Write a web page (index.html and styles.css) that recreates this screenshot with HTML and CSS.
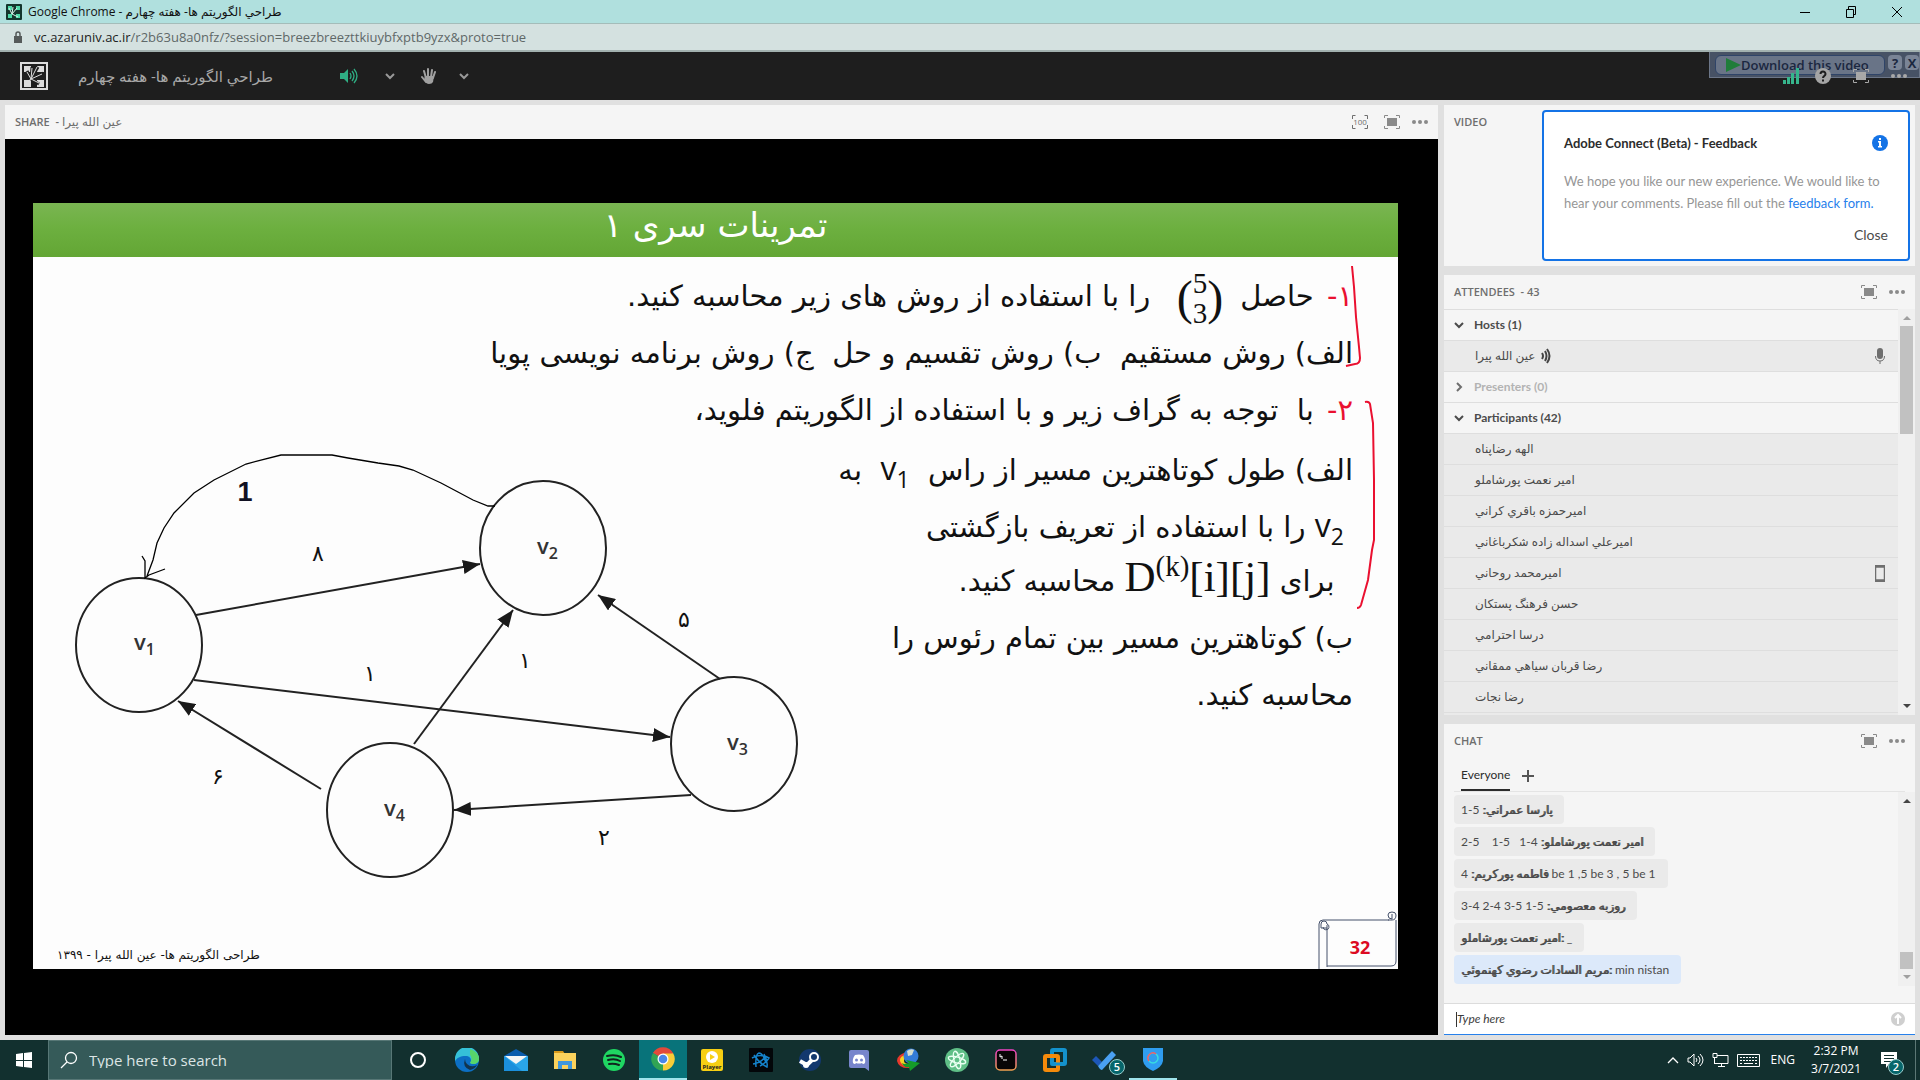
FILE: index.html
```html
<!DOCTYPE html>
<html lang="fa" dir="ltr">
<head>
<meta charset="utf-8">
<title>طراحي الگوريتم ها- هفته چهارم</title>
<link rel="stylesheet" href="styles.css">
</head>
<body>
<svg width="0" height="0" class="defs" aria-hidden="true">
  <defs>
    <symbol id="full" viewBox="0 0 16 16"><path d="M.5 4V1.500H4M12 1.500h3.500V4M15.500 12v2.500H12M4 14.500H.5V12" fill="none" stroke="currentColor"/><path d="M3 4h10v8H3z" fill="currentColor"/></symbol>
    <symbol id="dots" viewBox="0 0 16 16"><circle cx="2" cy="8" r="2" fill="currentColor"/><circle cx="8" cy="8" r="2" fill="currentColor"/><circle cx="14" cy="8" r="2" fill="currentColor"/></symbol>
    <symbol id="down" viewBox="0 0 10 10"><path d="M1 3l4 4 4-4" fill="none" stroke="currentColor" stroke-width="2"/></symbol>
    <symbol id="right" viewBox="0 0 10 10"><path d="M3 1l4 4-4 4" fill="none" stroke="currentColor" stroke-width="2"/></symbol>
    <symbol id="logo" viewBox="0 0 28 28"><path d="M1 1h26v26H1z" fill="none" stroke="currentColor" stroke-width="2"/><path d="M4 4h7v6H4zM17 4h7v6h-7zM4 18h7v7H4zM17 18h7v7h-7z" fill="currentColor"/><path d="M11 17L7 9M11 17l1-12M11 17l7-12M11 17l12-6M11 17l8 5" stroke="#1e1e1e" stroke-width="3"/><path d="M11 17L7 10M11 17l1-11M11 17l6-12M11 17l11-5M11 17l8 4M11 17l-5 4" stroke="currentColor" stroke-width="1"/></symbol>
    <marker id="head" markerUnits="userSpaceOnUse" markerWidth="18" markerHeight="14" refX="17" refY="7" orient="auto"><path d="M0 0l17 7-17 7z" fill="#1a1a1a"/></marker>
  </defs>
</svg>

<header class="titlebar">
  <svg class="favicon" viewBox="0 0 16 16"><rect width="16" height="16" rx="1" fill="#14352d"/><path d="M2 2h4v4H2zM10 2h4v4h-4zM2 10h4v4H2zM10 10h4v4h-4z" fill="#4ed8a8"/><path d="M6 10L3 4M6 10l1-7M6 10l5-6M6 10l6 3" stroke="#d9f5ec"/></svg>
  <span class="window-title">Google Chrome - <bdi>طراحي الگوريتم ها- هفته چهارم</bdi></span>
  <div class="window-buttons">
    <button aria-label="Minimize"><svg viewBox="0 0 12 12"><path d="M1 6.500h10" stroke="#000"/></svg></button>
    <button aria-label="Restore"><svg viewBox="0 0 12 12"><path d="M1.500 3.500h7v8h-7zM3.500 3V.5h7v8H9" fill="none" stroke="#000"/></svg></button>
    <button aria-label="Close window"><svg viewBox="0 0 12 12"><path d="M1 1l10 10M11 1L1 11" stroke="#000"/></svg></button>
  </div>
</header>
<div class="urlbar">
  <svg class="lock" viewBox="0 0 10 12"><path d="M1 5h8v7H1z" fill="#555a5a"/><path d="M3 5V3a2 2 0 014 0v2" fill="none" stroke="#555a5a" stroke-width="1.500"/></svg>
  <span><b class="host">vc.azaruniv.ac.ir</b>/r2b63u8a0nfz/?session=breezbreezttkiuybfxptb9yzx&amp;proto=true</span>
</div>

<nav class="appbar">
  <svg class="brand" viewBox="0 0 28 28"><use href="#logo"/></svg>
  <h1 class="room" dir="rtl">طراحي الگوريتم ها- هفته چهارم</h1>
  <button class="speaker" aria-label="Speaker"><svg width="18" height="16" viewBox="0 0 18 16"><path d="M0 5h4l4-4v14l-4-4H0z" fill="#2fae83"/><path d="M10 5q2 3 0 6M12 3q4 5 0 10M14 1q6 7 0 14" fill="none" stroke="#2fae83" stroke-width="1.300"/></svg></button>
  <button class="caret" aria-label="Speaker options"><svg width="10" height="10"><use href="#down"/></svg></button>
  <button class="hand" aria-label="Raise hand"><svg width="16" height="17" viewBox="0 0 16 17"><path d="M5 14L1 9M5 10L3 3M7 9V1M10 9l1-7M12 10l2-6" stroke="#a0a0a0" stroke-width="2" stroke-linecap="round"/><path d="M4 8h9l-1 6q-1 2-4 2-3 0-5-4z" fill="#a0a0a0"/></svg></button>
  <button class="caret near" aria-label="Hand options"><svg width="10" height="10"><use href="#down"/></svg></button>
  <div class="downloader">
    <button class="dl-main"><svg width="15" height="14" viewBox="0 0 15 14"><path d="M0 0l15 7-15 7z" fill="#1f7d3a"/></svg>Download this video</button>
    <button class="dl-small">?</button><button class="dl-small">X</button>
  </div>
  <div class="status">
    <svg class="signal" width="16" height="16" viewBox="0 0 16 16"><path d="M0 12h3v4H0zM4 9h3v7H4zM8 5h3v11H8zM13 0h3v16h-3z" fill="#36b58c"/></svg>
    <button aria-label="Help"><svg width="16" height="16" viewBox="0 0 16 16"><circle cx="8" cy="8" r="8" fill="#a5a5a5"/><path d="M5.500 6a2.500 2.500 0 115 0c0 2-2.500 2-2.500 4M8 11.500v2" stroke="#1e1e1e" stroke-width="2" fill="none"/></svg></button>
    <button aria-label="Full screen"><svg width="16" height="16"><use href="#full"/></svg></button>
    <button aria-label="Menu"><svg width="16" height="16"><use href="#dots"/></svg></button>
  </div>
</nav>

<main class="workspace">
  <section class="pod share">
    <header class="pod-head">
      <h2>SHARE &nbsp;- <bdi class="fa">عين الله پيرا</bdi></h2>
      <div class="tools wide">
        <button aria-label="Zoom 100"><svg width="16" height="14" viewBox="0 0 16 14"><path d="M.5 4V.5h3M12.500 .5h3V4M15.500 10v3.500h-3M3.500 13.500h-3V10" fill="none" stroke="#6e6e6e"/><text x="8" y="10" text-anchor="middle" class="hundred">100</text></svg></button>
        <button aria-label="Full screen"><svg width="16" height="16"><use href="#full"/></svg></button>
        <button aria-label="Options"><svg width="16" height="16"><use href="#dots"/></svg></button>
      </div>
    </header>
    <div class="stage">
      <article class="slide">
        <h3 class="slide-title" dir="rtl">تمرینات سری ۱</h3>
        <div class="slide-body" dir="rtl">
          <p><span class="num">۱-</span> حاصل <span class="binom"><span class="paren">(</span><span class="stack"><span>5</span><span>3</span></span><span class="paren">)</span></span>&nbsp; را با استفاده از روش های زیر محاسبه کنید.</p>
          <p>الف) روش مستقیم &nbsp;ب) روش تقسیم و حل &nbsp;ج) روش برنامه نویسی پویا</p>
          <p><span class="num">۲-</span> با &nbsp;توجه به گراف زیر و با استفاده از الگوریتم فلوید،</p>
          <p>الف) طول کوتاهترین مسیر از راس &nbsp;<bdi class="var">v<sub>1</sub></bdi>&nbsp; به</p>
          <p>&nbsp;<bdi class="var">v<sub>2</sub></bdi> را با استفاده از تعریف بازگشتی</p>
          <p>&nbsp; برای <bdi class="math">D<sup>(k)</sup>[i][j]</bdi> محاسبه کنید.</p>
          <p>ب) کوتاهترین مسیر بین تمام رئوس را</p>
          <p>محاسبه کنید.</p>
        </div>
        <p class="slide-foot" dir="rtl">طراحی الگوریتم ها- عین الله پیرا - ۱۳۹۹</p>
        <svg class="drawing" viewBox="0 0 1365 766">
          <g fill="none" stroke="#222" stroke-width="2">
            <ellipse cx="106" cy="442" rx="63" ry="67"/><ellipse cx="510" cy="345" rx="63" ry="67"/>
            <ellipse cx="701" cy="541" rx="63" ry="67"/><ellipse cx="357" cy="607" rx="63" ry="67"/>
            <g marker-end="url(#head)">
              <path d="M163 412L447 361"/><path d="M161 477L637 534"/><path d="M288 586L145 498"/>
              <path d="M381 541L480 407"/><path d="M687 476L565 392"/><path d="M658 592L421 607"/>
            </g>
          </g>
          <path d="M462 303h-7l-15-6-15-8-17-9-28-13-14-4-21-3-30-5-16-3h-51l-35 9-32 16-20 13-20 20-10 15-7 15-4 17-6 16M109 353l3 5v17l4-3 16-6" fill="none" stroke="#000" stroke-width="1.300"/>
          <g class="node"><text x="101" y="447">v<tspan class="lower" dy="5">1</tspan></text><text x="504" y="351">v<tspan class="lower" dy="5">2</tspan></text><text x="694" y="547">v<tspan class="lower" dy="5">3</tspan></text><text x="351" y="613">v<tspan class="lower" dy="5">4</tspan></text></g>
          <g class="weight"><text x="285" y="358">۸</text><text x="337" y="478">۱</text><text x="492" y="465">۱</text><text x="651" y="424">۵</text><text x="185" y="581">۶</text><text x="571" y="642">۲</text></g>
          <text x="212" y="298" class="one">1</text>
          <path d="M1319 63l2 21 2 30 3 30 1 11q0 6-5 6l-9 2M1332 199q4-1 5 2l3 19 1 57v60l-2 10-4 30-7 25q-1 3-4 3" fill="none" stroke="#ea1030" stroke-width="2"/>
          <g fill="none" stroke="#44506a"><path d="M1286 766v-45q0-4 4-4h66M1294 764v-42M1363 717v41q0 5-5 5h-64M1290 724a3 3 0 104-3 3 3 0 00-6 0v4h6M1355 717h4q4 0 4-5a4 3 0 00-8 0q0 4 4 4v-5"/></g>
          <text x="1327" y="751" class="pageno">32</text>
        </svg>
      </article>
    </div>
  </section>

  <aside class="side">
    <section class="pod video">
      <header class="pod-head"><h2>VIDEO</h2></header>
      <div class="toast" role="dialog" aria-label="Feedback">
        <div class="toast-head"><h3>Adobe Connect (Beta) - Feedback</h3><svg width="16" height="16" viewBox="0 0 16 16"><circle cx="8" cy="8" r="8" fill="#1473e6"/><path d="M7 3h2v2H7zM6 6h3v5h1v1.500H6V11h1V7.500H6z" fill="#fff"/></svg></div>
        <p>We hope you like our new experience. We would like to hear your comments. Please fill out the <a href="#">feedback form.</a></p>
        <button>Close</button>
      </div>
    </section>

    <section class="pod attendees">
      <header class="pod-head"><h2>ATTENDEES &nbsp;- 43</h2><div class="tools"><button aria-label="Full screen"><svg width="16" height="16"><use href="#full"/></svg></button><button aria-label="Options"><svg width="16" height="16"><use href="#dots"/></svg></button></div></header>
      <div class="scroller">
        <ul class="people">
          <li class="group"><svg width="10" height="10"><use href="#down"/></svg>Hosts (1)</li>
          <li><bdi>عين الله پيرا</bdi><svg class="talk" width="10" height="16" viewBox="0 0 10 16"><path d="M1 5q2 3 0 6M4 3q3 5 0 10M6 1q5 7 0 14" fill="none" stroke="#444" stroke-width="2"/></svg><svg class="device" width="10" height="16" viewBox="0 0 10 16"><rect x="2" width="6" height="11" rx="3" fill="#6e6e6e"/><path d="M.5 8q0 5 4.500 5t4.500-5M5 13v3" fill="none" stroke="#6e6e6e"/></svg></li>
          <li class="group empty"><svg width="10" height="10"><use href="#right"/></svg>Presenters (0)</li>
          <li class="group"><svg width="10" height="10"><use href="#down"/></svg>Participants (42)</li>
          <li><bdi>الهه رضاپناه</bdi></li>
          <li><bdi>امير نعمت پورشاملو</bdi></li>
          <li><bdi>اميرحمزه باقري كراني</bdi></li>
          <li><bdi>اميرعلي اسداله زاده شكرباغاني</bdi></li>
          <li><bdi>اميرمحمد روحاني</bdi><svg class="device" width="10" height="17" viewBox="0 0 10 17"><path d="M.5 .5h9v16h-9zM0 2h10M0 15h10" fill="none" stroke="#6e6e6e" stroke-width="1.500"/></svg></li>
          <li><bdi>حسن فرهنگ پستكان</bdi></li>
          <li><bdi>درسا احترامي</bdi></li>
          <li><bdi>رضا قربان سياهي ممقاني</bdi></li>
          <li><bdi>رضا نجات</bdi></li>
          <li></li>
        </ul>
        <div class="bar"><i class="up dim"></i><i class="thumb tall"></i><i class="dn"></i></div>
      </div>
    </section>

    <section class="pod chat">
      <header class="pod-head plain"><h2>CHAT</h2><div class="tools"><button aria-label="Full screen"><svg width="16" height="16"><use href="#full"/></svg></button><button aria-label="Options"><svg width="16" height="16"><use href="#dots"/></svg></button></div></header>
      <div class="tabs"><button class="tab">Everyone</button><button class="add" aria-label="New chat"><svg width="12" height="12" viewBox="0 0 12 12"><path d="M6 0v12M0 6h12" stroke="#555" stroke-width="2"/></svg></button></div>
      <div class="scroller">
        <div class="messages">
          <p>1-5 <b dir="rtl">پارسا عمراني:</b></p>
          <p>2-5 &nbsp;&nbsp; 1-5 &nbsp; 1-4 <b dir="rtl">امير نعمت پورشاملو:</b></p>
          <p>4 <b dir="rtl">فاطمه پوركريم:</b> be 1 ,5 be 3 , 5 be 1</p>
          <p>3-4 2-4 3-5 1-5 <b dir="rtl">روزبه معصومي:</b></p>
          <p><b><bdi>امير نعمت پورشاملو</bdi>:</b> _</p>
          <p class="fresh"><b><bdi>مريم السادات رضوي كهنموئي</bdi>:</b> min nistan</p>
        </div>
        <div class="bar"><i class="up"></i><i class="thumb low"></i><i class="dn dim"></i></div>
      </div>
      <form class="compose"><input type="text" placeholder="Type here" aria-label="Message"><button type="button" aria-label="Send"><svg width="14" height="14" viewBox="0 0 14 14"><circle cx="7" cy="7" r="7" fill="#cfcfcf"/><path d="M7 12V3M4 6l3-3 3 3" fill="none" stroke="#fff" stroke-width="2"/></svg></button></form>
    </section>
  </aside>
</main>

<footer class="taskbar">
  <button class="start" aria-label="Start"><svg width="16" height="16" viewBox="0 0 16 16"><path d="M0 2l7-1v7H0zM8 1l8-1v8H8zM0 9h7v6l-7-1zM8 9h8v7l-8-1z" fill="#fff"/></svg></button>
  <label class="search"><svg width="18" height="18" viewBox="0 0 18 18"><circle cx="11" cy="7" r="5.500" fill="none" stroke="#fff" stroke-width="1.300"/><path d="M7 11l-6 6" stroke="#fff" stroke-width="1.300"/></svg><input type="text" placeholder="Type here to search" aria-label="Search"></label>
  <div class="apps">
    <button aria-label="Cortana"><svg viewBox="0 0 24 24"><circle cx="12" cy="12" r="7" fill="none" stroke="#fff" stroke-width="2"/></svg></button>
    <button aria-label="Edge"><svg viewBox="0 0 24 24"><circle cx="12" cy="12" r="12" fill="#0c6fc4"/><path d="M0 11A12 12 0 0124 11c0 5-6 6-9 4 2-2 1-7-4-7-6 0-9 2-11 5z" fill="#35c1d8"/><path d="M15 1q9 3 9 10c0 5-6 6-9 4 3-4 1-7 0-8z" fill="#58d66a"/><path d="M10 11q-3 8 5 11 5-1 7-5-6 3-10-1-2-2-2-5z" fill="#12344d"/></svg></button>
    <button aria-label="Mail"><svg viewBox="0 0 24 24"><path d="M0 8l12-7 12 7z" fill="#0b5cad"/><path d="M0 8h24v15H0z" fill="#2aa5e8"/><path d="M0 8l18 15H0z" fill="#1b8fdc"/><path d="M1 8h22l-11 8z" fill="#f5f5f5"/></svg></button>
    <button aria-label="File Explorer"><svg viewBox="0 0 24 24"><path d="M1 3h9l2 3H1z" fill="#d99a1b"/><path d="M1 5h22v16H1z" fill="#fbd25c"/><path d="M5 21v-8h14v8h-4v-4H9v4z" fill="#3f97dd"/></svg></button>
    <button aria-label="Spotify"><svg viewBox="0 0 24 24"><circle cx="12" cy="12" r="11" fill="#1fd662"/><path d="M5 8q8-2 14 1M6 12q7-2 12 1M7 16q5-1 10 1" fill="none" stroke="#10251f" stroke-width="2" stroke-linecap="round"/></svg></button>
    <button class="active" aria-label="Chrome"><svg viewBox="0 0 24 24"><path d="M12 12L2 6a11.500 11.500 0 0120 0z" fill="#e24a3b"/><path d="M12 12L2 6a11.500 11.500 0 0010 17.500z" fill="#31a454"/><path d="M12 12V6h10a11.500 11.500 0 01-10 17.500z" fill="#f8cc37"/><path d="M2 6q4-5 10-5 7 0 10 5.500H12z" fill="#e24a3b"/><circle cx="12" cy="12" r="5.500" fill="#fff"/><circle cx="12" cy="12" r="4.300" fill="#4a86e8"/></svg></button>
    <button aria-label="Player"><svg viewBox="0 0 24 24"><rect x="1" y="1" width="22" height="22" rx="2" fill="#f7cf13"/><circle cx="12" cy="9" r="6" fill="#fff"/><path d="M10 6l5 3-5 3z" fill="#f7cf13"/><text x="12" y="21" text-anchor="middle" class="player">Player</text></svg></button>
    <button aria-label="Battle.net"><svg viewBox="0 0 24 24"><rect width="24" height="24" rx="1" fill="#030609"/><g fill="none" stroke="#1583cc" stroke-width="1.500"><path d="M7 19Q6 6 10 5q4 0 7 10M3 10q8-5 17 0-2 4-9 8M5 7q5 8 13 12 1-6-3-13M4 16q8-1 13-8"/></g></svg></button>
    <button aria-label="Steam"><svg viewBox="0 0 24 24"><circle cx="12" cy="12" r="11" fill="#13386e"/><path d="M2 13l7 4 6-6" stroke="#fff" stroke-width="4" fill="none"/><circle cx="16" cy="9" r="4" fill="#13386e" stroke="#fff" stroke-width="2"/><circle cx="8" cy="17" r="3" fill="#fff"/></svg></button>
    <button aria-label="Discord"><svg viewBox="0 0 24 24"><path d="M4 2h16q2 0 2 2v19l-4-3H4q-2 0-2-2V4q0-2 2-2z" fill="#7785cc"/><path d="M8 7q4-1 8 0 3 4 2 8-2 2-3 0-3 1-6 0-1 2-3 0-1-4 2-8z" fill="#fff"/><circle cx="9.500" cy="12" r="1.500" fill="#7785cc"/><circle cx="14.500" cy="12" r="1.500" fill="#7785cc"/></svg></button>
    <button aria-label="Download Manager"><svg viewBox="0 0 24 24"><path d="M12 4Q1 6 1 13q2 8 13 7l-1-3q-7 0-7-4 0-4 6-7z" fill="#e8392c"/><path d="M12 6Q3 8 4 13q2 6 10 5l-1-2q-5 0-5-3 0-3 4-5z" fill="#f6d223"/><circle cx="15" cy="8" r="7.500" fill="#347cd8"/><path d="M11 3q4-3 7-1l-2 5-4 1z" fill="#d5ddcf"/><path d="M10 12l14 3-10 8-1-4q-5 1-7-4 3 2 7 0z" fill="#159b28"/></svg></button>
    <button aria-label="Atom"><svg viewBox="0 0 24 24"><circle cx="12" cy="12" r="12" fill="#5fbf87"/><g fill="none" stroke="#e9fff2" stroke-width="1.300"><ellipse cx="12" cy="12" rx="9" ry="3" transform="rotate(15 12 12)"/><ellipse cx="12" cy="12" rx="9" ry="3" transform="rotate(75 12 12)"/><ellipse cx="12" cy="12" rx="9" ry="3" transform="rotate(135 12 12)"/></g></svg></button>
    <button aria-label="Terminal"><svg viewBox="0 0 24 24"><defs><linearGradient id="tg" x2="0" y2="1"><stop stop-color="#ef43c4"/><stop offset="1" stop-color="#f0a050"/></linearGradient></defs><rect x="2" y="2" width="20" height="20" rx="4" fill="#080506" stroke="url(#tg)" stroke-width="1.500"/><path d="M6 6v3l2-1v3M9 12h4" stroke="#fff" fill="none"/></svg></button>
    <button aria-label="VMware"><svg viewBox="0 0 24 24"><rect x="9" y="2" width="13" height="14" rx="1" fill="none" stroke="#1492cd" stroke-width="4"/><rect x="2" y="8" width="13" height="14" rx="1" fill="none" stroke="#f58a0b" stroke-width="4"/><path d="M9 10v6h8" fill="none" stroke="#1492cd" stroke-width="3"/></svg></button>
    <button class="todo" aria-label="To Do"><svg viewBox="0 0 24 24"><path d="M0 12l4-4 6 6-4 4z" fill="#1d57b8"/><path d="M6 18l14-15 4 4-14 15q-2 0-4-4z" fill="#4aa0f2"/></svg><span class="badge">5</span></button>
    <button class="open" aria-label="Hotspot Shield"><svg viewBox="0 0 24 24"><path d="M2 1h20v13q-1 6-10 10Q3 20 2 14z" fill="#2f9df0"/><circle cx="12" cy="11" r="5" fill="none" stroke="#38dce0" stroke-width="1.500"/><path d="M15 7a5 5 0 00-7 7" fill="none" stroke="#ee5a6a" stroke-width="1.500"/></svg></button>
  </div>
  <div class="tray">
    <svg width="12" height="8" viewBox="0 0 12 8"><path d="M1 7l5-5 5 5" fill="none" stroke="#fff" stroke-width="1.300"/></svg>
    <svg width="17" height="14" viewBox="0 0 17 14"><path d="M1 5h2l4-4v12L3 9H1z" fill="none" stroke="#fff"/><path d="M9 5q2 2 0 4M11 3q4 4 0 8M13 1q6 6 0 12" fill="none" stroke="#fff"/></svg>
    <svg width="17" height="14" viewBox="0 0 17 14"><path d="M5 2.500h11v8H3M9.500 11v2M6 13.500h7M1 .5h4v4H1zM2.500 4v7" fill="none" stroke="#fff"/></svg>
    <svg width="23" height="13" viewBox="0 0 23 13"><path d="M.5 .5h22v12H.5z" fill="none" stroke="#fff"/><path d="M3 3.500h17M3 6.500h17" stroke="#fff" stroke-dasharray="2 1"/><path d="M3 9.500h2M7 9.500h9M18 9.500h2" stroke="#fff"/></svg>
    <span class="lang">ENG</span>
    <time class="clock">2:32 PM<br>3/7/2021</time>
    <div class="notify"><svg width="16" height="16" viewBox="0 0 16 16"><path d="M0 0h16v12H8l-3 4v-4H0z" fill="#fff"/><path d="M3 3.500h10M3 6.500h10M3 9.500h7" stroke="#12302f"/></svg><span class="badge">2</span></div>
  </div>
</footer>
</body>
</html>
```
FILE: styles.css
```css
* { box-sizing: border-box; }
html, body { height: 100%; }
body {
  margin: 0;
  display: flex;
  flex-direction: column;
  background: #e0e0e0;
  color: #4b4b4b;
  font: 12px/16px "Open Sans", "DejaVu Sans", sans-serif;
  overflow: hidden;
}
h1, h2, h3, p, ul { margin: 0; padding: 0; }
button { border: 0; padding: 0; background: none; color: inherit; font: inherit; display: block; }
button svg { display: block; }
input { font: inherit; }
.defs { position: absolute; }

.titlebar { flex: none; height: 24px; display: flex; align-items: center; background: #b0e0de; border-bottom: 1px solid #a4bcb9; color: #111; padding-left: 6px; gap: 6px; }
.favicon { width: 16px; height: 16px; }
.window-buttons { margin-left: auto; display: flex; }
.window-buttons button { width: 46px; height: 23px; display: grid; place-items: center; }
.window-buttons svg { width: 12px; height: 12px; }
.urlbar { flex: none; height: 28px; display: flex; align-items: center; gap: 11px; padding-left: 13px; background: #d4e1e0; border-bottom: 2px solid #a2b1af; color: #5f6868; font-size: 13px; }
.host { font-weight: 400; color: #222; }
.lock { width: 10px; height: 12px; }

.appbar { flex: none; position: relative; height: 48px; display: flex; align-items: center; background: #1e1e1e; color: #a8a8a8; padding: 0 13px 0 20px; }
.brand { width: 28px; height: 28px; color: #dcdcdc; }
.room { margin-left: 17px; width: 208px; font-size: 15px; line-height: 24px; font-weight: 400; white-space: nowrap; }
.speaker { margin-left: 67px; }
.caret { margin-left: 27px; color: #999; }
.caret.near { margin-left: 22px; }
.hand { margin-left: 26px; }
.status { position: relative; margin-left: auto; display: flex; gap: 22px; }
.signal { margin-right: -6px; }
.downloader { position: absolute; top: 0; right: 0; width: 211px; height: 26px; padding: 3px 0 0 5px; display: flex; gap: 3px; background: rgba(105, 125, 160, .55); border: 1px solid #6c7688; border-top: 0; color: #1b2740; font-weight: 600; }
.dl-main { width: 171px; height: 20px; display: flex; align-items: center; padding-left: 10px; border: 1px solid #2f4468; border-radius: 6px; background: rgba(140, 150, 170, .5); font-size: 13px; white-space: nowrap; }
.dl-small { width: 14px; height: 15px; line-height: 14px; border-radius: 4px; background: #7a8496; font-size: 13px; font-weight: 700; }

.workspace { flex: 1; min-height: 0; display: grid; grid-template-columns: minmax(0, 1fr) 471px; gap: 6px; padding: 5px; }
.pod { background: #f5f5f5; display: flex; flex-direction: column; min-height: 0; min-width: 0; }
.pod-head { flex: none; height: 34px; padding: 0 10px; display: flex; align-items: center; justify-content: space-between; color: #6e6e6e; }
.pod-head h2 { font-size: 11px; line-height: 16px; font-weight: 600; }
.pod-head .fa { font-size: 12px; font-weight: 400; }
.tools { display: flex; gap: 12px; color: #8a8a8a; }
.tools.wide button:first-child { margin-right: 4px; }
.hundred { font: 8px "Open Sans", sans-serif; fill: #6e6e6e; }

.stage { flex: 1; min-height: 0; padding: 64px 40px 66px 28px; background: #000; }
.slide { position: relative; height: 100%; display: flex; flex-direction: column; background: #fdfdfd; color: #111; }
.slide-title { height: 54px; background: linear-gradient(#7ab552, #6db040 45%, #63a634); color: #fff; text-align: center; font: 34px/44px "DejaVu Sans", sans-serif; }
.slide-body { flex: 1; padding: 11px 45px 0 0; font: 29px/57px "DejaVu Sans", sans-serif; }
.slide-body p { height: 57px; white-space: nowrap; }
.num { color: #ea1030; margin-left: 4px; }
.binom { display: inline-flex; align-items: center; height: 57px; margin: 0 8px; vertical-align: middle; direction: ltr; font: 29px/30px "Liberation Serif", serif; }
.paren { font-size: 48px; }
.stack { display: flex; flex-direction: column; }
.var { font-family: "Open Sans", sans-serif; font-size: 32px; }
.var sub { font-size: 23px; line-height: 0; vertical-align: -8px; }
.math { font: 43px/40px "Liberation Serif", serif; }
.math sup { font-size: 29px; line-height: 0; }
.slide-foot { align-self: flex-start; padding: 0 0 4px 24px; font: 12px/20px "DejaVu Sans", sans-serif; }
.drawing { position: absolute; inset: 0; width: 100%; height: 100%; }
.node { font: 600 22px "Open Sans", sans-serif; fill: #333; }
.lower { font-size: 16px; }
.weight { font: 22px "DejaVu Sans", sans-serif; text-anchor: middle; fill: #111; }
.one { font: bold 27px "Liberation Sans", sans-serif; text-anchor: middle; fill: #112; }
.pageno { font: bold 18px "Open Sans", sans-serif; text-anchor: middle; fill: #dc0a22; }

.side { display: grid; grid-template-rows: 161fr 440fr 311fr; gap: 9px; min-height: 0; }
.video { position: relative; }
.toast { position: absolute; top: 5px; right: 5px; width: 368px; height: 151px; padding: 16px 20px 14px; background: #fff; border: 2px solid #1473e6; border-radius: 4px; display: flex; flex-direction: column; font-family: Lato, sans-serif; }
.toast-head { display: flex; justify-content: space-between; align-items: center; padding-bottom: 12px; }
.toast h3 { font-size: 13px; line-height: 30px; font-weight: 700; color: #2c2c2c; }
.toast p { font-size: 13px; line-height: 22px; color: #969696; }
.toast a { color: #2680eb; text-decoration: none; }
.toast button { align-self: flex-end; margin-top: auto; font-size: 14px; line-height: 20px; }

.scroller { flex: 1; min-height: 0; display: flex; overflow: hidden; }
.people { flex: 1; list-style: none; overflow: hidden; }
.people li { height: 31px; padding: 0 13px 0 31px; display: flex; align-items: center; background: #eaeaea; border-top: 1px solid #dedede; font-size: 12px; }
.people .group { padding-left: 10px; gap: 10px; background: #f5f5f5; font-family: Lato, sans-serif; font-weight: 700; }
.people .empty { color: #b3b3b3; }
.people .empty svg { color: #6e6e6e; }
.talk { margin-left: 6px; }
.device { margin-left: auto; }
.bar { flex: none; width: 17px; background: #f0f0f0; display: flex; flex-direction: column; align-items: center; padding: 7px 0; }
.up, .dn { border: 4px solid transparent; border-top: 0; border-bottom-color: #444; }
.dn { border-top: 4px solid #444; border-bottom: 0; margin-top: auto; }
.up.dim { border-bottom-color: #a0a0a0; }
.dn.dim { border-top-color: #a0a0a0; }
.thumb { width: 13px; background: #c1c1c1; }
.tall { height: 108px; margin-top: 6px; }
.low { height: 17px; margin-top: auto; margin-bottom: 6px; }
.low + .dn { margin-top: 0; }

.chat .tabs, .messages, .compose { font-family: Lato, "DejaVu Sans", sans-serif; }
.tabs { flex: none; display: flex; align-items: flex-end; gap: 12px; margin: 0 10px; padding-left: 7px; height: 34px; border-bottom: 1px solid #e4e4e4; }
.tab { height: 26px; padding-bottom: 4px; border-bottom: 2px solid #2c2c2c; color: #2c2c2c; }
.add { padding-bottom: 9px; }
.messages { flex: 1; display: flex; flex-direction: column; align-items: flex-start; gap: 3px; padding: 3px 10px 0; }
.messages p { height: 29px; padding: 0 12px 0 7px; line-height: 29px; border-radius: 4px; background: #eaeaea; white-space: nowrap; }
.messages .fresh { background: #dce9fa; }
.messages b { unicode-bidi: isolate; font-weight: 400; text-shadow: 1px 0 0; }
.chat .scroller { margin-bottom: 17px; }
.compose { flex: none; height: 32px; display: flex; align-items: center; background: #fff; border-top: 1px solid #dcdcdc; border-bottom: 1px solid #2680eb; padding: 0 10px 0 12px; }
.compose input { flex: 1; height: 15px; padding: 0; border: 0; border-left: 1px solid #333; outline: 0; font-style: italic; }
.compose input::placeholder { color: #3c3c3c; }

.taskbar { flex: none; height: 40px; display: flex; background: #12302f; color: #fff; }
.start { width: 48px; display: grid; place-items: center; }
.search { width: 344px; display: flex; align-items: center; gap: 11px; padding-left: 11px; background: #355a59; border: 1px solid #577776; }
.search input { flex: 1; border: 0; background: none; padding: 0; font-size: 15px; outline: 0; }
.search input::placeholder { color: #dce5e5; }
.apps { display: flex; gap: 1px; padding-left: 2px; }
.apps button { position: relative; width: 48px; height: 40px; display: grid; place-items: center; }
.apps svg { width: 24px; height: 24px; }
.apps .active { background: #08737a; border-bottom: 2px solid #9fe4ec; }
.apps .open { border-bottom: 2px solid #9fe4ec; }
.player { font: bold 6px "Open Sans", sans-serif; fill: #222; }
.badge { position: absolute; width: 16px; height: 16px; border-radius: 8px; border: 1px solid #9cc; background: #06666b; color: #fff; font-size: 11px; font-weight: 600; line-height: 14px; text-align: center; }
.todo .badge { left: 29px; top: 19px; }
.tray { margin-left: auto; display: flex; align-items: center; gap: 8px; padding-right: 4px; }
.lang { margin-left: 3px; }
.clock { margin: 0 12px 0 8px; line-height: 18px; text-align: center; }
.notify { position: relative; display: flex; height: 40px; align-items: center; padding-right: 18px; border-right: 1px solid #5c7775; }
.notify .badge { left: 7px; top: 19px; }
```
